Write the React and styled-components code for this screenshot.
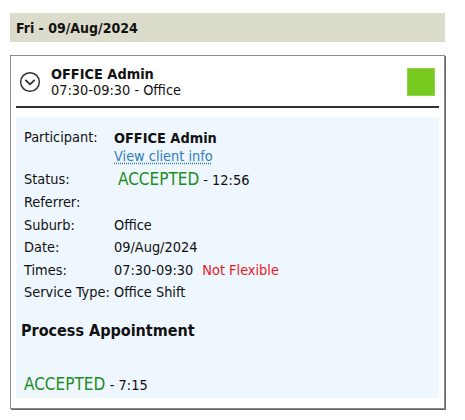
import React from "react";
import styled, { createGlobalStyle } from "styled-components";

const Global = createGlobalStyle`
  html, body { margin: 0; padding: 0; background: #fff; }
  body { font-family: "DejaVu Sans Condensed", "DejaVu Sans", sans-serif; color: #111; }
`;

const Page = styled.div`
  padding: 13px 20px 10px 10px;
  width: 435px;
`;

const DateBar = styled.div`
  background: #dcdccc;
  height: 29px;
  display: flex;
  align-items: center;
  padding-left: 6px;
  font-weight: bold;
  font-size: 14px;
  margin-bottom: 13px;
`;

const Card = styled.div`
  border: 1px solid #8a8a8a;
  box-shadow: 1px 1px 0 #666;
  padding: 0 5px 10px 5px;
`;

const Header = styled.div`
  display: flex;
  align-items: center;
  padding: 10px 3px 8px 3px;
  border-bottom: 2px solid #333;
  margin-bottom: 9px;
`;

const Chevron = styled.svg`
  width: 22px;
  height: 22px;
  flex: none;
  margin-right: 10px;
`;

const HeadText = styled.div`
  flex: 1;
  font-size: 14.4px;
  line-height: 16px;
`;

const Name = styled.div`
  font-weight: bold;
`;

const Swatch = styled.div`
  width: 28px;
  height: 28px;
  background: #77c91f;
  border: 1px solid #8fd64a;
  box-sizing: border-box;
  margin-right: 1px;
`;

const Panel = styled.div`
  background: #eef6fe;
  padding: 9px 8px 3px 8px;
`;

const Grid = styled.div`
  display: grid;
  grid-template-columns: 90px 1fr;
  font-size: 14.4px;
`;

const Label = styled.div`
  line-height: 22.4px;
`;

const Value = styled.div`
  line-height: 22.4px;
`;

const Bold = styled.div`
  font-weight: bold;
  line-height: 19px;
  padding-top: 3px;
`;

const Link = styled.a`
  color: #2f7cc0;
  text-decoration: underline dotted #2f7cc0;
  text-underline-offset: 2px;
  display: inline-block;
  line-height: 16px;
  margin-bottom: 4px;
`;

const Status = styled.span`
  color: #1e8c1e;
  font-size: 17px;
  margin-left: ${(p) => p.$indent || 0}px;
`;

const Small = styled.span`
  font-size: 14.4px;
  color: #111;
`;

const Red = styled.span`
  color: #e8181e;
  margin-left: 9px;
`;

const Heading = styled.h2`
  font-size: 16px;
  font-weight: bold;
  margin: 18px 0 0 -3px;
`;

const Footer = styled.div`
  margin-top: 34px;
  line-height: 20px;
`;

export default function App() {
  return (
    <>
      <Global />
      <Page>
        <DateBar>Fri - 09/Aug/2024</DateBar>
        <Card>
          <Header>
            <Chevron viewBox="0 0 24 24" fill="none" stroke="#333" strokeWidth="1.6" strokeLinecap="round" strokeLinejoin="round">
              <circle cx="12" cy="12" r="10.2" />
              <path d="M7.5 10.2 L12 14.6 L16.5 10.2" strokeWidth="2" />
            </Chevron>
            <HeadText>
              <Name>OFFICE Admin</Name>
              <div>07:30-09:30 - Office</div>
            </HeadText>
            <Swatch />
          </Header>
          <Panel>
            <Grid>
              <Label>Participant:</Label>
              <div>
                <Bold>OFFICE Admin</Bold>
                <Link href="#">View client info</Link>
              </div>
              <Label>Status:</Label>
              <Value>
                <Status $indent={4}>ACCEPTED</Status> <Small>- 12:56</Small>
              </Value>
              <Label>Referrer:</Label>
              <Value />
              <Label>Suburb:</Label>
              <Value>Office</Value>
              <Label>Date:</Label>
              <Value>09/Aug/2024</Value>
              <Label>Times:</Label>
              <Value>
                07:30-09:30<Red>Not Flexible</Red>
              </Value>
              <Label>Service Type:</Label>
              <Value>Office Shift</Value>
            </Grid>
            <Heading>Process Appointment</Heading>
            <Footer>
              <Status>ACCEPTED</Status> <Small>- 7:15</Small>
            </Footer>
          </Panel>
        </Card>
      </Page>
    </>
  );
}
